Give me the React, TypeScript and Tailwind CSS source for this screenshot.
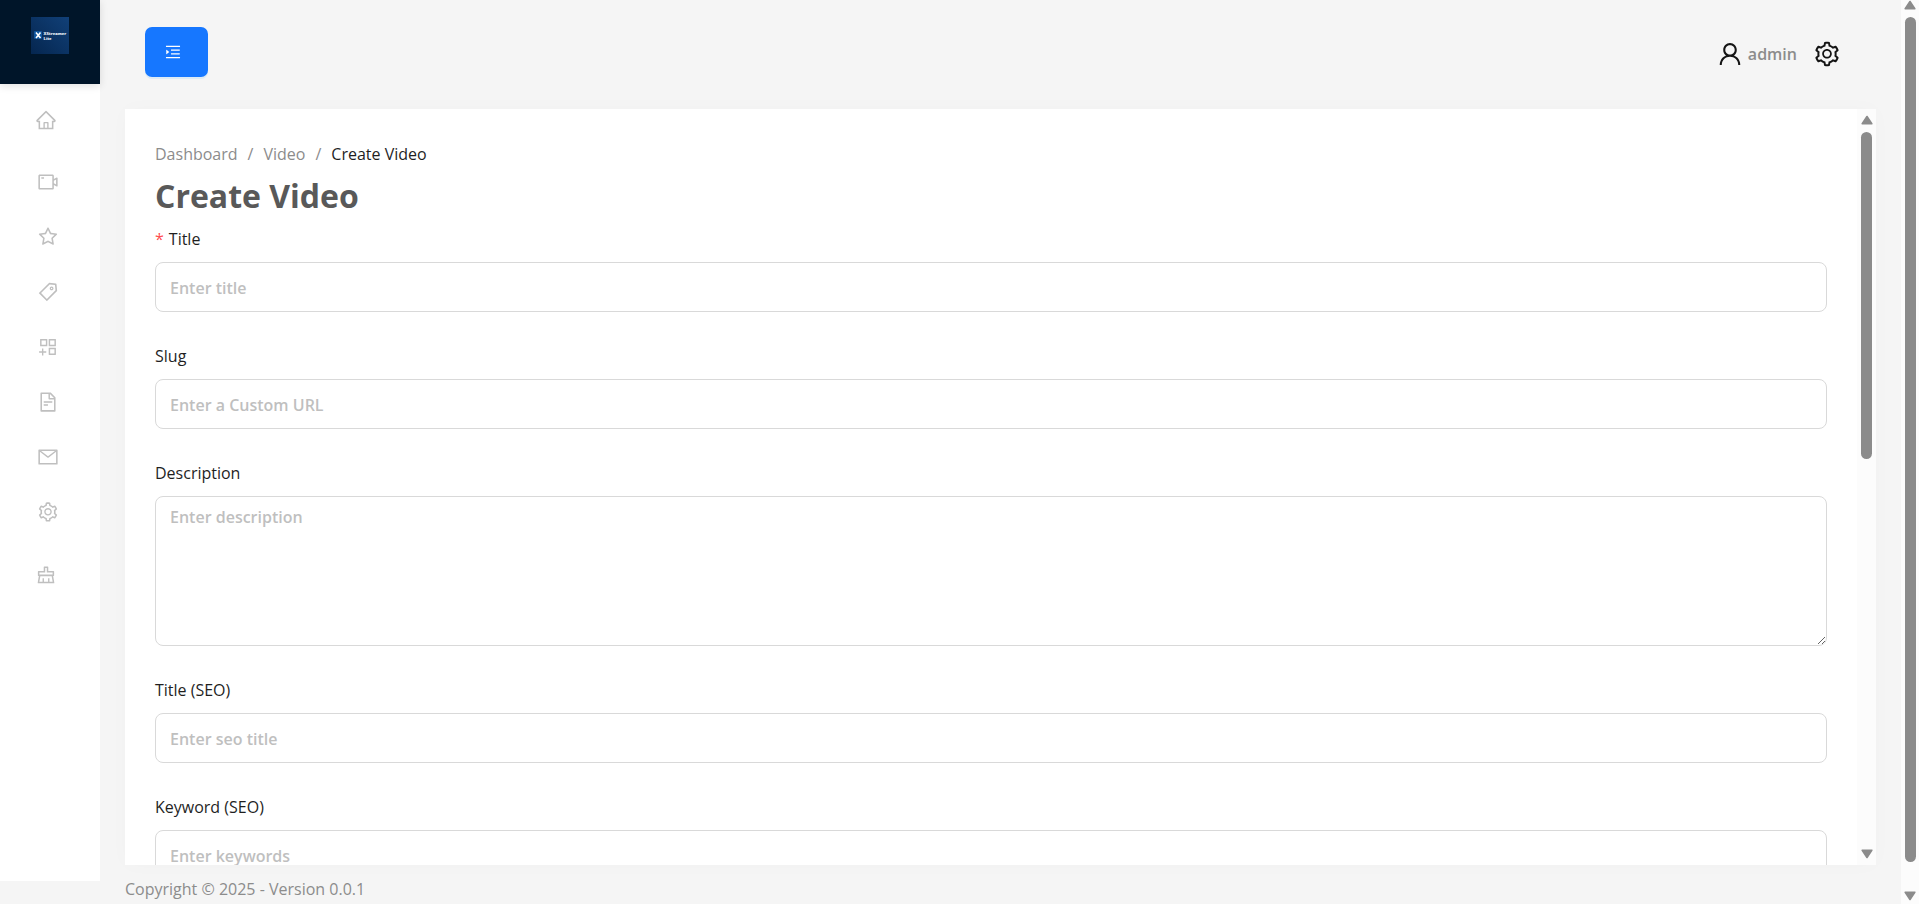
import {
  AiOutlineAppstoreAdd,
  AiOutlineClear,
  AiOutlineFileText,
  AiOutlineHome,
  AiOutlineMail,
  AiOutlineMenuUnfold,
  AiOutlineSetting,
  AiOutlineStar,
  AiOutlineTag,
  AiOutlineUser,
  AiOutlineVideoCamera,
} from "react-icons/ai";
import type { IconType } from "react-icons";

const contentLinks: { label: string; icon: IconType }[] = [
  { label: "Videos", icon: AiOutlineVideoCamera },
  { label: "Stars", icon: AiOutlineStar },
  { label: "Tags", icon: AiOutlineTag },
  { label: "Categories", icon: AiOutlineAppstoreAdd },
  { label: "Pages", icon: AiOutlineFileText },
  { label: "Mail", icon: AiOutlineMail },
  { label: "Settings", icon: AiOutlineSetting },
];

function Logo() {
  return (
    <svg viewBox="0 0 38 37" className="h-[37px] w-[38px]" role="img" aria-label="XStreamer Lite">
      <defs>
        <linearGradient id="logo-bg" x1="0" y1="1" x2="1" y2="0">
          <stop offset="0" stopColor="#05264f" />
          <stop offset="1" stopColor="#114078" />
        </linearGradient>
      </defs>
      <rect width="38" height="37" fill="url(#logo-bg)" />
      <rect x="3" y="14" width="8" height="8" rx="1" fill="#10559c" />
      <path d="M5 15.500l4.500 5.500M9.500 15.500L5 21" stroke="#fff" strokeWidth="1.600" />
      <text x="12.500" y="18" fontSize="4.100" fontWeight="800" fill="#e6eef7" fontFamily="Open Sans, sans-serif">
        XStreamer
      </text>
      <text x="12.500" y="22.500" fontSize="4.100" fontWeight="800" fill="#e6eef7" fontFamily="Open Sans, sans-serif">
        Lite
      </text>
    </svg>
  );
}

function Sidebar() {
  return (
    <aside className="mb-[23px] flex w-[100px] shrink-0 flex-col bg-white">
      <div className="flex h-[84px] shrink-0 justify-center bg-[#001529] pt-[17px] shadow-[0_2px_8px_rgba(0,0,0,0.12)]">
        <Logo />
      </div>
      <nav className="flex flex-col pt-[11px] text-[22px] text-[#bfbfbf]">
        <a href="#home" aria-label="Home" className="flex h-[50px] items-center pl-[35px]">
          <AiOutlineHome />
        </a>
        <ul className="mt-3 mb-[13px] flex flex-col gap-[5px]">
          {contentLinks.map(({ label, icon: Icon }) => (
            <li key={label}>
              <a href="#menu" aria-label={label} className="flex h-[50px] items-center pl-[37px]">
                <Icon />
              </a>
            </li>
          ))}
        </ul>
        <a href="#clear" aria-label="Clear cache" className="flex h-[50px] items-center pl-[35px]">
          <AiOutlineClear />
        </a>
      </nav>
    </aside>
  );
}

function TopBar() {
  return (
    <header className="flex h-[109px] shrink-0 items-start justify-between pt-[27px] pr-[35px] pl-5">
      <button
        type="button"
        aria-label="Expand menu"
        className="flex h-[50px] w-[63px] items-center rounded-[7px] bg-[#1677ff] pl-[19px] text-[18px] text-white shadow-[0_2px_0_rgba(5,145,255,0.1)]"
      >
        <AiOutlineMenuUnfold />
      </button>
      <div className="flex h-[53px] items-center">
        <AiOutlineUser className="text-[28px] text-[#141414]" />
        <span className="ml-1 text-base font-semibold text-[#8c8c8c]">admin</span>
        <button type="button" aria-label="Settings" className="ml-4 text-[28px] text-[#141414]">
          <AiOutlineSetting />
        </button>
      </div>
    </header>
  );
}

function Scrollbar({ thumb, className }: { thumb: string; className: string }) {
  return (
    <div aria-hidden="true" className={"flex shrink-0 flex-col items-center bg-[#fcfcfc] " + className}>
      <svg viewBox="0 0 12 10" className="h-[10px] w-3 shrink-0">
        <path d="M6 1.500L10.800 8.800H1.200Z" fill="#8b8b8b" stroke="#8b8b8b" strokeWidth="1.600" strokeLinejoin="round" />
      </svg>
      <div className="flex min-h-0 w-[11px] flex-1 flex-col py-[7px]">
        <div className={"rounded-full bg-[#8b8b8b] " + thumb} />
      </div>
      <svg viewBox="0 0 12 10" className="h-[10px] w-3 shrink-0">
        <path d="M6 8.500L10.800 1.200H1.200Z" fill="#8b8b8b" stroke="#8b8b8b" strokeWidth="1.600" strokeLinejoin="round" />
      </svg>
    </div>
  );
}

const control =
  "block w-full rounded-[8px] border border-[#d9d9d9] bg-white px-[14px] text-base font-semibold text-[#1f1f1f] outline-none placeholder:text-[#bfbfbf] focus:border-[#1677ff]";

function Field({
  id,
  label,
  placeholder,
  required,
  multiline,
}: {
  id: string;
  label: string;
  placeholder: string;
  required?: boolean;
  multiline?: boolean;
}) {
  return (
    <div className="flex flex-col gap-[10px]">
      <label htmlFor={id} className="flex h-[27px] items-center gap-[5px] text-base text-[#1f1f1f]">
        {required && <span className="text-[#ff4d4f]">*</span>}
        {label}
      </label>
      {multiline ? (
        <textarea id={id} placeholder={placeholder} className={control + " h-[150px] resize-y py-2"} />
      ) : (
        <input id={id} type="text" placeholder={placeholder} className={control + " h-[50px] pt-[2px]"} />
      )}
    </div>
  );
}

function CreateVideo() {
  return (
    <main className="flex min-h-0 flex-1 bg-white shadow-[0_0_20px_rgba(0,0,0,0.02)]">
      <div className="min-w-0 flex-1 overflow-hidden px-[30px] pt-[31px]">
        <nav aria-label="Breadcrumb">
          <ol className="flex h-7 items-center gap-[10px] text-base text-[#8c8c8c]">
            <li><a href="#dashboard">Dashboard</a></li>
            <li aria-hidden="true">/</li>
            <li><a href="#video">Video</a></li>
            <li aria-hidden="true">/</li>
            <li className="text-[#1f1f1f]">Create Video</li>
          </ol>
        </nav>
        <h1 className="mt-2 text-[32px] leading-[40px] font-bold text-[#595959]">Create Video</h1>
        <form className="mt-[9px] flex flex-col gap-[30px]">
          <Field id="title" label="Title" placeholder="Enter title" required />
          <Field id="slug" label="Slug" placeholder="Enter a Custom URL" />
          <Field id="description" label="Description" placeholder="Enter description" multiline />
          <Field id="seo-title" label="Title (SEO)" placeholder="Enter seo title" />
          <Field id="keywords" label="Keyword (SEO)" placeholder="Enter keywords" />
        </form>
      </div>
      <Scrollbar className="w-[19px] py-[6px]" thumb="h-[46%]" />
    </main>
  );
}

export default function App() {
  return (
    <div className="flex h-screen overflow-hidden bg-[#f5f5f5] font-['Open_Sans','Noto_Sans',sans-serif]">
      <Sidebar />
      <div className="flex min-w-0 flex-1 flex-col px-[25px]">
        <TopBar />
        <CreateVideo />
        <footer className="flex h-[39px] shrink-0 items-center pt-[9px] text-base text-[#8c8c8c]">
          Copyright © 2025 - Version 0.0.1
        </footer>
      </div>
      <Scrollbar className="w-[18px] pb-[3px]" thumb="h-[97.5%]" />
    </div>
  );
}
